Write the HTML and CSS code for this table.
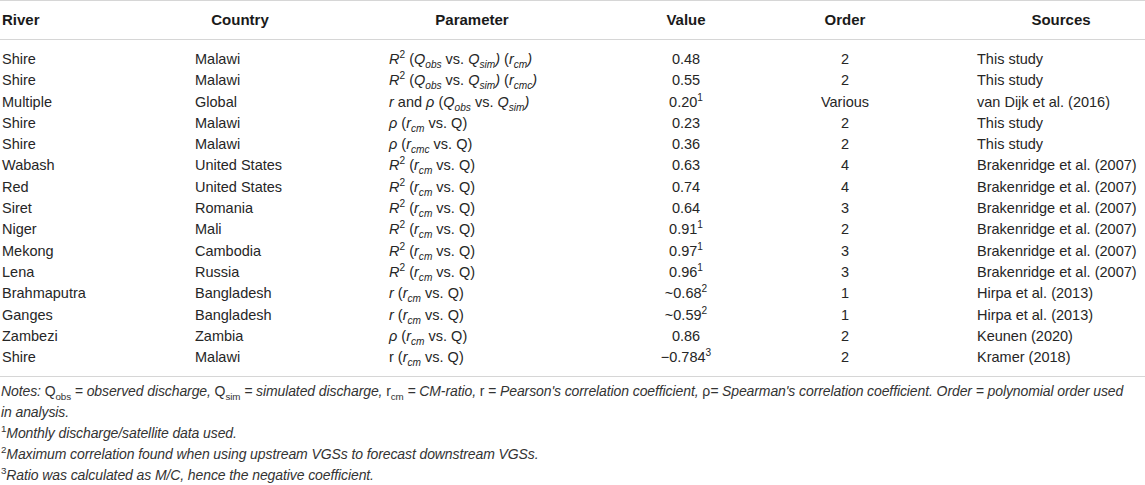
FILE: index.html
```html
<!DOCTYPE html>
<html lang="en">
<head>
  <meta charset="UTF-8">
  <title>River correlation table</title>
  <link rel="stylesheet" href="styles.css">
</head>
<body>

  <div class="table-wrap">
    <div class="thead">
      <div class="th left">River</div>
      <div class="th">Country</div>
      <div class="th">Parameter</div>
      <div class="th">Value</div>
      <div class="th">Order</div>
      <div class="th">Sources</div>
    </div>

    <div class="tbody">
      <div class="row">
        <div>Shire</div><div>Malawi</div>
        <div><i>R</i><sup>2</sup> (<i>Q<sub>obs</sub></i> vs. <i>Q<sub>sim</sub>)</i> (<i>r<sub>cm</sub>)</i></div>
        <div class="c">0.48</div><div class="c">2</div><div>This study</div>
      </div>
      <div class="row">
        <div>Shire</div><div>Malawi</div>
        <div><i>R</i><sup>2</sup> (<i>Q<sub>obs</sub></i> vs. <i>Q<sub>sim</sub>)</i> (<i>r<sub>cmc</sub>)</i></div>
        <div class="c">0.55</div><div class="c">2</div><div>This study</div>
      </div>
      <div class="row">
        <div>Multiple</div><div>Global</div>
        <div><i>r</i> and <i>ρ</i> (<i>Q<sub>obs</sub></i> vs. <i>Q<sub>sim</sub>)</i></div>
        <div class="c">0.20<sup>1</sup></div><div class="c">Various</div><div>van Dijk et al. (2016)</div>
      </div>
      <div class="row">
        <div>Shire</div><div>Malawi</div>
        <div><i>ρ</i> (<i>r<sub>cm</sub></i> vs. Q)</div>
        <div class="c">0.23</div><div class="c">2</div><div>This study</div>
      </div>
      <div class="row">
        <div>Shire</div><div>Malawi</div>
        <div><i>ρ</i> (<i>r<sub>cmc</sub></i> vs. Q)</div>
        <div class="c">0.36</div><div class="c">2</div><div>This study</div>
      </div>
      <div class="row">
        <div>Wabash</div><div>United States</div>
        <div><i>R</i><sup>2</sup> (<i>r<sub>cm</sub></i> vs. Q)</div>
        <div class="c">0.63</div><div class="c">4</div><div>Brakenridge et al. (2007)</div>
      </div>
      <div class="row">
        <div>Red</div><div>United States</div>
        <div><i>R</i><sup>2</sup> (<i>r<sub>cm</sub></i> vs. Q)</div>
        <div class="c">0.74</div><div class="c">4</div><div>Brakenridge et al. (2007)</div>
      </div>
      <div class="row">
        <div>Siret</div><div>Romania</div>
        <div><i>R</i><sup>2</sup> (<i>r<sub>cm</sub></i> vs. Q)</div>
        <div class="c">0.64</div><div class="c">3</div><div>Brakenridge et al. (2007)</div>
      </div>
      <div class="row">
        <div>Niger</div><div>Mali</div>
        <div><i>R</i><sup>2</sup> (<i>r<sub>cm</sub></i> vs. Q)</div>
        <div class="c">0.91<sup>1</sup></div><div class="c">2</div><div>Brakenridge et al. (2007)</div>
      </div>
      <div class="row">
        <div>Mekong</div><div>Cambodia</div>
        <div><i>R</i><sup>2</sup> (<i>r<sub>cm</sub></i> vs. Q)</div>
        <div class="c">0.97<sup>1</sup></div><div class="c">3</div><div>Brakenridge et al. (2007)</div>
      </div>
      <div class="row">
        <div>Lena</div><div>Russia</div>
        <div><i>R</i><sup>2</sup> (<i>r<sub>cm</sub></i> vs. Q)</div>
        <div class="c">0.96<sup>1</sup></div><div class="c">3</div><div>Brakenridge et al. (2007)</div>
      </div>
      <div class="row">
        <div>Brahmaputra</div><div>Bangladesh</div>
        <div><i>r</i> (<i>r<sub>cm</sub></i> vs. Q)</div>
        <div class="c">~0.68<sup>2</sup></div><div class="c">1</div><div>Hirpa et al. (2013)</div>
      </div>
      <div class="row">
        <div>Ganges</div><div>Bangladesh</div>
        <div><i>r</i> (<i>r<sub>cm</sub></i> vs. Q)</div>
        <div class="c">~0.59<sup>2</sup></div><div class="c">1</div><div>Hirpa et al. (2013)</div>
      </div>
      <div class="row">
        <div>Zambezi</div><div>Zambia</div>
        <div><i>ρ</i> (<i>r<sub>cm</sub></i> vs. Q)</div>
        <div class="c">0.86</div><div class="c">2</div><div>Keunen (2020)</div>
      </div>
      <div class="row">
        <div>Shire</div><div>Malawi</div>
        <div>r (<i>r<sub>cm</sub></i> vs. Q)</div>
        <div class="c">−0.784<sup>3</sup></div><div class="c">2</div><div>Kramer (2018)</div>
      </div>
    </div>
  </div>

  <div class="notes">
    <p><i>Notes:</i> Q<sub>obs</sub> <i>= observed discharge,</i> Q<sub>sim</sub> <i>= simulated discharge,</i> r<sub>cm</sub> <i>= CM-ratio,</i> r <i>= Pearson's correlation coefficient,</i> ρ<i>= Spearman's correlation coefficient. Order = polynomial order used in analysis.</i></p>
    <p><sup>1</sup><i>Monthly discharge/satellite data used.</i></p>
    <p><sup>2</sup><i>Maximum correlation found when using upstream VGSs to forecast downstream VGSs.</i></p>
    <p><sup>3</sup><i>Ratio was calculated as M/C, hence the negative coefficient.</i></p>
  </div>

</body>
</html>
```

FILE: styles.css
```css
* {
  margin: 0;
  padding: 0;
  box-sizing: border-box;
}

body {
  background: #ffffff;
  color: #262626;
  font-family: 'Liberation Sans', Arial, sans-serif;
  font-size: 14.5px;
}

sup, sub {
  font-size: 70%;
  line-height: 0;
}

.table-wrap {
  width: 1145px;
  border-top: 1px solid #d6d6d6;
  border-bottom: 1px solid #d6d6d6;
}

.thead {
  display: grid;
  grid-template-columns: 195px 90px 374px 54px 264px 168px;
  height: 39px;
  line-height: 38px;
  border-bottom: 1px solid #d6d6d6;
  font-weight: bold;
  font-size: 15px;
  color: #1a1a1a;
}

.th {
  text-align: center;
  white-space: nowrap;
}

.th.left {
  text-align: left;
  padding-left: 2px;
}

.tbody {
  padding: 9px 0 8px;
}

.row {
  display: grid;
  grid-template-columns: 195px 194px 211px 172px 146px 227px;
  line-height: 21.3px;
  white-space: nowrap;
}

.row div:first-child {
  padding-left: 2px;
}

.row div:last-child {
  padding-left: 59px;
}

.row .c {
  text-align: center;
}

.notes {
  margin-top: 4px;
  width: 1145px;
  font-size: 14px;
  letter-spacing: -0.1px;
  line-height: 21px;
  color: #333;
  padding: 0 14px 0 1px;
}
```
